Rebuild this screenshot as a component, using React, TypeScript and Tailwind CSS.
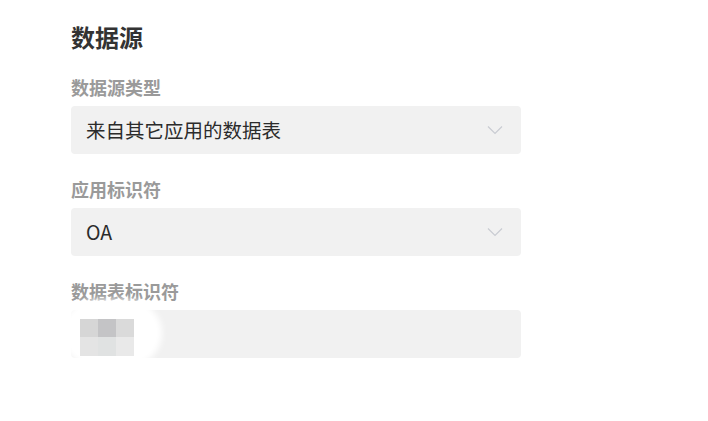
const font = {
  fontFamily: '"Noto Sans CJK SC", "Noto Sans", sans-serif',
};

const Chevron = () => (
  <svg width="16" height="10" viewBox="0 0 16 10" fill="none" className="shrink-0">
    <path d="M1 1.5 L8 8.5 L15 1.5" stroke="#c9ccd2" strokeWidth="1.2" />
  </svg>
);

const Label = ({ children }: { children: React.ReactNode }) => (
  <div className="text-[18px] leading-6 font-bold text-[#9a9a9a] mb-[7px]">{children}</div>
);

const SelectBox = ({ value }: { value: string }) => (
  <div className="h-12 w-[450px] rounded bg-[#f1f1f1] flex items-center justify-between pl-[15px] pr-[18px]">
    <span className="text-[19.5px] text-[#2b2b2b]">{value}</span>
    <Chevron />
  </div>
);

export default function App() {
  return (
    <div className="min-h-screen bg-white pl-[71px] pt-[22px]" style={font}>
      <h2 className="text-[24px] leading-[30px] font-bold text-[#333]">数据源</h2>

      <div className="mt-[23px]">
        <Label>数据源类型</Label>
        <SelectBox value="来自其它应用的数据表" />
      </div>

      <div className="mt-[23px]">
        <Label>应用标识符</Label>
        <SelectBox value="OA" />
      </div>

      <div className="mt-[23px]">
        <Label>数据表标识符</Label>
        <div className="relative h-12 w-[450px] rounded bg-[#f1f1f1]">
          {/* redacted value */}
          <div className="absolute -left-[9px] -top-[10px] h-[66px] w-[100px] rounded-[40px] bg-white blur-[3px]" />
          <div className="absolute left-[9px] top-[9px] grid grid-cols-3">
            <div className="h-[18px] w-[18px] bg-[#d6d6d6]" />
            <div className="h-[18px] w-[18px] bg-[#c4c4c6]" />
            <div className="h-[18px] w-[18px] bg-[#dadada]" />
            <div className="h-[19px] w-[18px] bg-[#e4e4e4]" />
            <div className="h-[19px] w-[18px] bg-[#e0e2e2]" />
            <div className="h-[19px] w-[18px] bg-[#e9e9e9]" />
          </div>
        </div>
      </div>
    </div>
  );
}
